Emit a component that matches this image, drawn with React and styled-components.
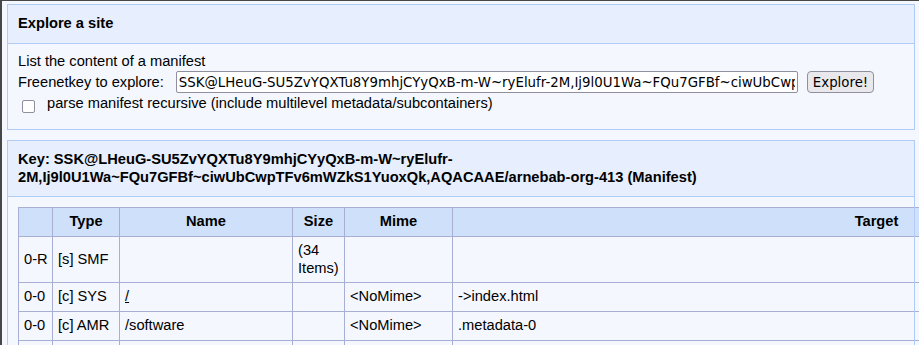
import React from 'react';
import styled, { createGlobalStyle } from 'styled-components';

const GlobalStyle = createGlobalStyle`
  html, body {
    margin: 0;
    padding: 0;
    overflow: hidden;
    background: #f4f7fd;
  }
  body {
    font-family: "Liberation Sans", Arial, sans-serif;
    font-size: 14.67px;
    line-height: 17.67px;
    color: #000;
  }
`;

const Frame = styled.div`
  box-sizing: border-box;
  width: 919px;
  height: 345px;
  overflow: hidden;
  border-top: 1px solid #474747;
  border-left: 2px solid #474747;
  background: #f4f7fd;
  padding: 3px 4px 0 5px;
`;

const Box = styled.div`
  position: relative;
  border: 1px solid #b0cbf6;
  margin-bottom: 10px;

  &::after {
    content: '';
    position: absolute;
    inset: -1px;
    border: 1px solid #b0cbf6;
    pointer-events: none;
  }
`;

const BoxHeader = styled.div`
  background: #e7eefd;
  border-bottom: 1px solid #b0cbf6;
  padding: 10px;
  font-weight: bold;
`;

const BoxContent = styled.div`
  padding: ${p => p.$pad || '9px 10px 16px'};
`;

const Row = styled.div`
  display: flex;
  align-items: ${p => p.$align || 'baseline'};
  margin-top: ${p => p.$top || 0}px;
`;

const Label = styled.label`
  margin-right: 12px;
`;

const KeyInput = styled.input`
  box-sizing: border-box;
  width: 622px;
  height: 22px;
  padding: 0 2px;
  border: 1px solid #8f8f9d;
  border-radius: 2px;
  background: #fff;
  font-family: "DejaVu Sans", sans-serif;
  font-size: 13.33px;
  color: #000;
`;

const Button = styled.button`
  box-sizing: border-box;
  height: 22px;
  margin-left: 9px;
  padding: 0 5px;
  border: 1px solid #8f8f9d;
  border-radius: 4px;
  background: #e9e9ed;
  font-family: "DejaVu Sans", sans-serif;
  font-size: 13.33px;
  color: #000;
`;

const Checkbox = styled.input`
  appearance: none;
  box-sizing: border-box;
  width: 13px;
  height: 13px;
  margin: 5px 12px 0 4px;
  border: 1px solid #8f8f9d;
  border-radius: 2px;
  background: #fff;
  flex: none;
`;

const Table = styled.table`
  border-collapse: collapse;
  table-layout: fixed;
  width: 1282px;
  border: 1px solid #a9aed4;
`;

const Th = styled.th`
  background: #cfe0fb;
  border: 1px solid #a9aed4;
  padding: 5px;
  font-weight: bold;
  text-align: center;
`;

const Td = styled.td`
  border: 1px solid #a9aed4;
  padding: 5px;
  vertical-align: middle;
  text-align: left;
  white-space: ${p => (p.$wrap ? 'normal' : 'nowrap')};
`;

const Link = styled.a`
  color: #000;
  text-decoration: underline;
`;

const KEY = 'SSK@LHeuG-SU5ZvYQXTu8Y9mhjCYyQxB-m-W~ryElufr-2M,Ij9l0U1Wa~FQu7GFBf~ciwUbCwpTFv6mWZkS1YuoxQk,AQACAAE/arnebab-org-413';

const columns = [
  { title: '', width: 34 },
  { title: 'Type', width: 67 },
  { title: 'Name', width: 173 },
  { title: 'Size', width: 52, wrap: true },
  { title: 'Mime', width: 108 },
  { title: 'Target', width: 848 },
];

const rows = [
  ['0-R', '[s] SMF', '', '(34 Items)', '', ''],
  ['0-0', '[c] SYS', { href: '/' }, '', '<NoMime>', '->index.html'],
  ['0-0', '[c] AMR', '/software', '', '<NoMime>', '.metadata-0'],
  ['0-0', '[c] AMR', '/software/emacs', '', '<NoMime>', '.metadata-1'],
  ['0-0', '[c] AMR', '/software/mercurial', '', '<NoMime>', '.metadata-2'],
];

function App() {
  return (
    <>
      <GlobalStyle />
      <Frame>
        <Box>
          <BoxHeader>Explore a site</BoxHeader>
          <BoxContent>
            <div>List the content of a manifest</div>
            <Row $top={1}>
              <Label htmlFor="key">Freenetkey to explore:</Label>
              <KeyInput id="key" type="text" defaultValue={KEY} />
              <Button type="button">Explore!</Button>
            </Row>
            <Row $align="flex-start" $top={1.5}>
              <Checkbox type="checkbox" id="recursive" />
              <label htmlFor="recursive">parse manifest recursive (include multilevel metadata/subcontainers)</label>
            </Row>
          </BoxContent>
        </Box>

        <Box>
          <BoxHeader>
            Key: SSK@LHeuG-SU5ZvYQXTu8Y9mhjCYyQxB-m-W~ryElufr-<wbr />2M,Ij9l0U1Wa~FQu7GFBf~ciwUbCwpTFv6mWZkS1YuoxQk,AQACAAE/arnebab-org-413 (Manifest)
          </BoxHeader>
          <BoxContent $pad="10px 10px 10px">
            <Table>
              <colgroup>
                {columns.map((c, i) => (
                  <col key={i} style={{ width: c.width }} />
                ))}
              </colgroup>
              <thead>
                <tr>
                  {columns.map((c, i) => (
                    <Th key={i}>{c.title}</Th>
                  ))}
                </tr>
              </thead>
              <tbody>
                {rows.map((row, r) => (
                  <tr key={r}>
                    {row.map((cell, i) => (
                      <Td key={i} $wrap={columns[i].wrap}>
                        {typeof cell === 'object' ? <Link href="#">{cell.href}</Link> : cell}
                      </Td>
                    ))}
                  </tr>
                ))}
              </tbody>
            </Table>
          </BoxContent>
        </Box>
      </Frame>
    </>
  );
}

export default App;
